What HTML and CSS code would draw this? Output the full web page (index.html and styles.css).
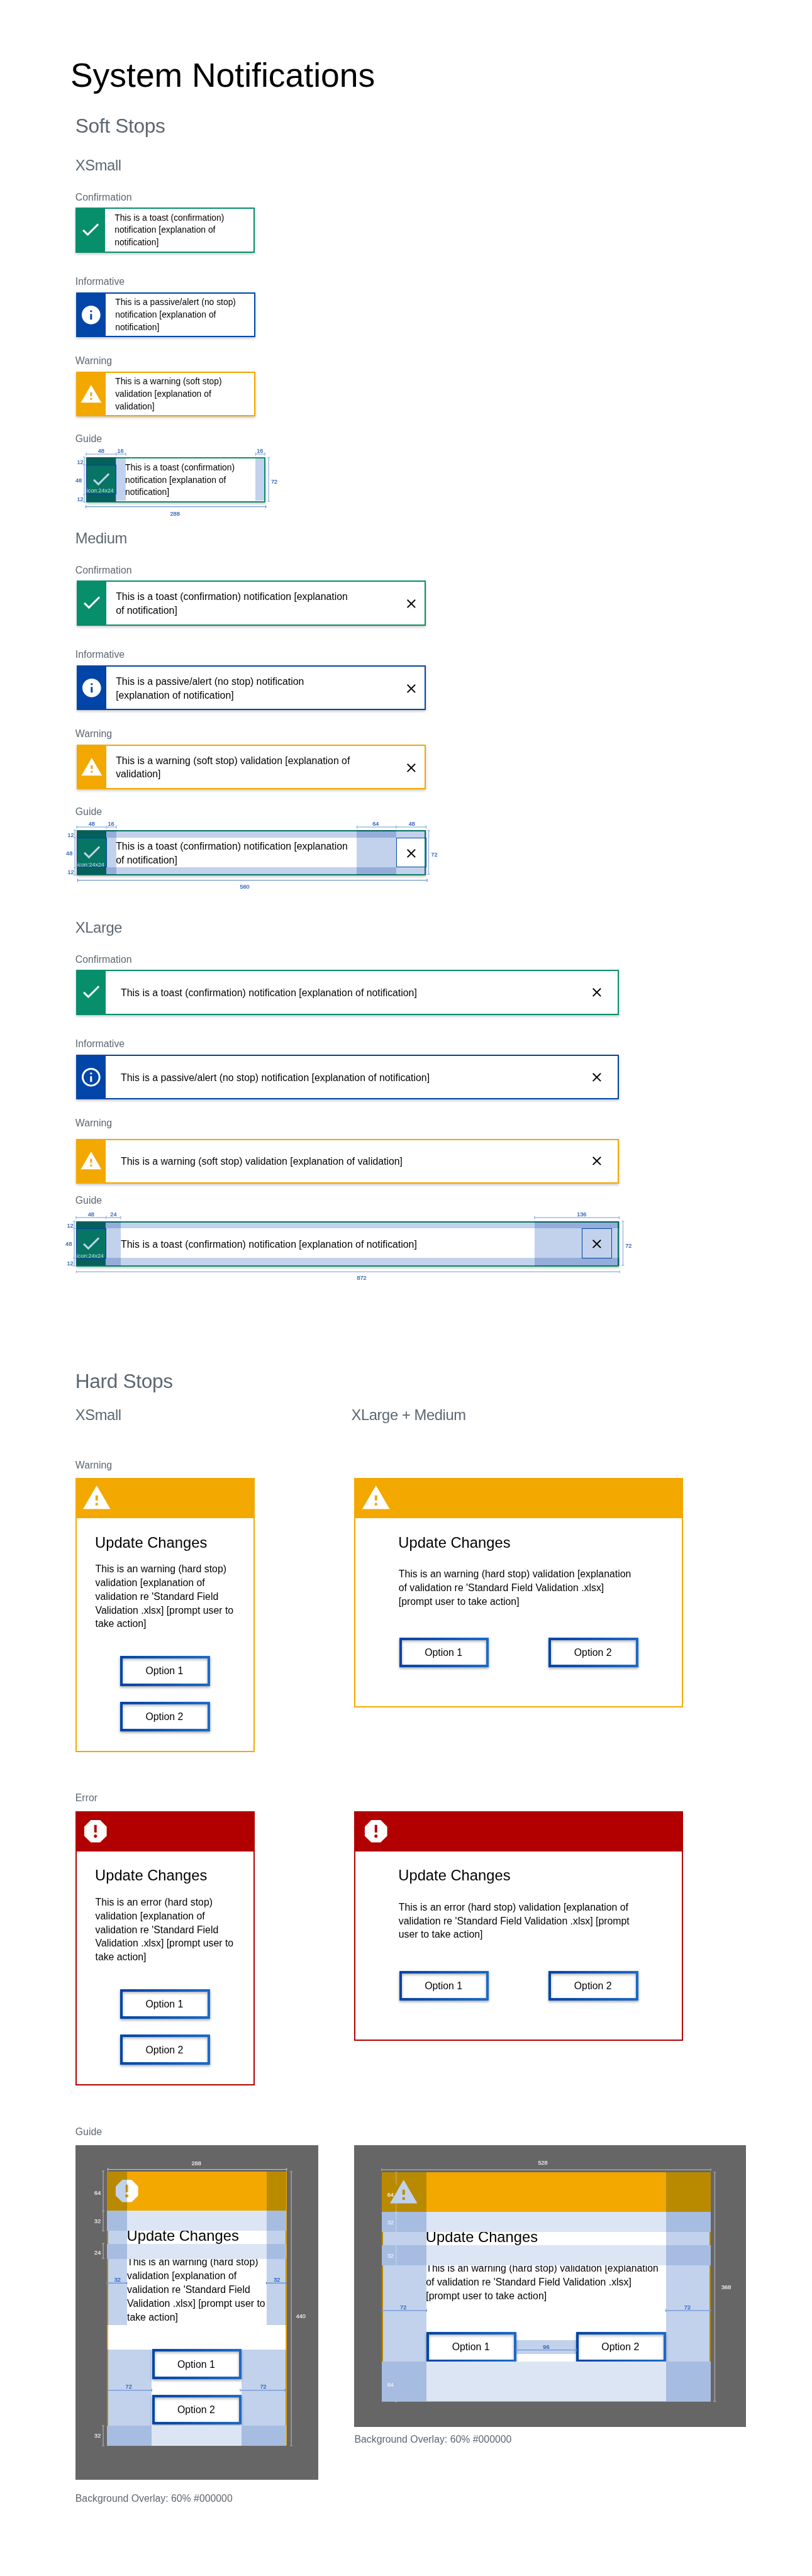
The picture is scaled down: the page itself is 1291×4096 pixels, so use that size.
FILE: index.html
```html
<!DOCTYPE html>
<html lang="en">
<head>
<meta charset="utf-8">
<title>System Notifications</title>
<link rel="stylesheet" href="styles.css">
</head>
<body>
<svg class="sprite" aria-hidden="true">
  <symbol id="check" viewBox="0 0 24 24"><path d="M9 16.17L4.83 12l-1.42 1.41L9 19 21 7l-1.41-1.41z"/></symbol>
  <symbol id="info" viewBox="0 0 24 24"><path d="M12 2C6.48 2 2 6.48 2 12s4.480 10 10 10 10-4.480 10-10S17.520 2 12 2zm1 15h-2v-6h2v6zm0-8h-2V7h2v2z"/></symbol>
  <symbol id="info-outline" viewBox="0 0 24 24"><path d="M11 17h2v-6h-2v6zm1-15C6.48 2 2 6.48 2 12s4.480 10 10 10 10-4.480 10-10S17.520 2 12 2zm0 18c-4.410 0-8-3.590-8-8s3.590-8 8-8 8 3.590 8 8-3.590 8-8 8zM11 9h2V7h-2v2z"/></symbol>
  <symbol id="warning" viewBox="0 0 24 24"><path d="M1 21h22L12 2 1 21zm12-3h-2v-2h2v2zm0-4h-2v-4h2v4z"/></symbol>
  <symbol id="report" viewBox="0 0 24 24"><path d="M15.730 3H8.270L3 8.270v7.460L8.270 21h7.460L21 15.730V8.270L15.730 3zM12 17.300c-.72 0-1.300-.58-1.300-1.300 0-.72.58-1.300 1.300-1.300.72 0 1.300.58 1.300 1.300 0 .72-.58 1.300-1.300 1.300zm1-4.300h-2V7h2v6z"/></symbol>
  <symbol id="close" viewBox="0 0 24 24"><path d="M19 6.410L17.590 5 12 10.590 6.410 5 5 6.410 10.590 12 5 17.590 6.410 19 12 13.410 17.590 19 19 17.590 13.410 12z"/></symbol>
</svg>
<main class="page">
  <h1>System Notifications</h1>

  <h2 class="soft-title">Soft Stops</h2>

  <section class="sizes xsmall">
    <h3>XSmall</h3>
    <div class="spec">
      <p class="label">Confirmation</p>
      <div class="toast confirm first"><span class="badge"><svg class="tick"><use href="#check"/></svg></span><p>This is a toast (confirmation)<br>notification [explanation of<br>notification]</p></div>
    </div>
    <div class="spec">
      <p class="label">Informative</p>
      <div class="toast inform"><span class="badge"><svg><use href="#info"/></svg></span><p>This is a passive/alert (no stop)<br>notification [explanation of<br>notification]</p></div>
    </div>
    <div class="spec">
      <p class="label">Warning</p>
      <div class="toast warn"><span class="badge"><svg><use href="#warning"/></svg></span><p>This is a warning (soft stop)<br>validation [explanation of<br>validation]</p></div>
    </div>
    <div class="spec guide">
      <p class="label">Guide</p>
      <div class="toast confirm"><span class="badge"><svg class="tick"><use href="#check"/></svg></span><p>This is a toast (confirmation)<br>notification [explanation of<br>notification]</p>
        <svg class="over tints" viewBox="0 0 288 72">
          <rect width="48" height="72"/><rect width="48" height="12"/><rect y="60" width="48" height="12"/>
          <rect x="48" y="2" width="16" height="68"/><rect x="272" y="2" width="14" height="68"/>
        </svg>
        <svg class="over dims" viewBox="0 0 288 72">
          <rect class="frame" x=".5" y="12.5" width="47" height="47"/>
          <text class="note" x="22.500" y="56.800">icon:24x24</text>
          <path d="M0-5H64M272-5H287.500M0-7.500v5M48-7.500v5M63.500-7.500v5M272-7.500v5M287-7.500v5M-3 0V72M-5 0h4M-5 12h4M-5 60h4M-5 72h4M293 .5V71M291 .5h4M291 71h4"/>
          <path class="strong" d="M-.5 79.500H288.500M-.5 77v5M288.500 77v5"/>
          <text x="24" y="-7.200">48</text><text x="55" y="-7.200">16</text><text x="279" y="-7.200">16</text>
          <text x="-9.500" y="10.900">12</text><text x="-12" y="39.900">48</text><text x="-9.500" y="70.900">12</text>
          <text x="302" y="42.900">72</text><text x="142.500" y="93.900">288</text>
        </svg>
      </div>
    </div>
  </section>

  <section class="sizes medium">
    <h3>Medium</h3>
    <div class="spec">
      <p class="label">Confirmation</p>
      <div class="toast confirm"><span class="badge"><svg class="tick"><use href="#check"/></svg></span><p>This is a toast (confirmation) notification [explanation<br>of notification]</p><svg class="close"><use href="#close"/></svg></div>
    </div>
    <div class="spec">
      <p class="label">Informative</p>
      <div class="toast inform"><span class="badge"><svg><use href="#info"/></svg></span><p>This is a passive/alert (no stop) notification<br>[explanation of notification]</p><svg class="close"><use href="#close"/></svg></div>
    </div>
    <div class="spec">
      <p class="label">Warning</p>
      <div class="toast warn"><span class="badge"><svg><use href="#warning"/></svg></span><p>This is a warning (soft stop) validation [explanation of<br>validation]</p><svg class="close"><use href="#close"/></svg></div>
    </div>
    <div class="spec guide">
      <p class="label">Guide</p>
      <div class="toast confirm"><span class="badge"><svg class="tick"><use href="#check"/></svg></span><p>This is a toast (confirmation) notification [explanation<br>of notification]</p><svg class="close"><use href="#close"/></svg>
        <svg class="over tints" viewBox="0 0 561 72">
          <rect width="48" height="72"/><rect x="48" width="16" height="72"/><rect x="449" width="64" height="72"/>
          <rect width="561" height="12"/><rect y="60" width="561" height="12"/>
        </svg>
        <svg class="over dims" viewBox="0 0 561 72">
          <rect class="frame" x=".5" y="12.500" width="47" height="47"/><rect class="frame" x="513.500" y="12.500" width="47" height="47"/>
          <text class="note" x="22.500" y="58.800">icon:24x24</text>
          <path d="M0-5H64M450-5H561M0-7.500v5M48-7.500v5M63.500-7.500v5M450-7.500v5M513-7.500v5M561-7.500v5M-3 0V72M-5 0h4M-5 12h4M-5 60h4M-5 72h4M565 .5V71M563 .5h4M563 71h4"/>
          <path class="strong" d="M1.500 80.500H562.500M1.500 78v5M562.500 78v5"/>
          <text x="24" y="-7.200">48</text><text x="55" y="-7.200">16</text><text x="480" y="-7.200">64</text><text x="538" y="-7.200">48</text>
          <text x="-9.500" y="10.900">12</text><text x="-12" y="39.900">48</text><text x="-9.500" y="70.900">12</text>
          <text x="574" y="42.900">72</text><text x="269.700" y="93.900">560</text>
        </svg>
      </div>
    </div>
  </section>

  <section class="sizes xlarge">
    <h3>XLarge</h3>
    <div class="spec">
      <p class="label">Confirmation</p>
      <div class="toast confirm"><span class="badge"><svg class="tick"><use href="#check"/></svg></span><p>This is a toast (confirmation) notification [explanation of notification]</p><svg class="close"><use href="#close"/></svg></div>
    </div>
    <div class="spec">
      <p class="label">Informative</p>
      <div class="toast inform"><span class="badge"><svg><use href="#info-outline"/></svg></span><p>This is a passive/alert (no stop) notification [explanation of notification]</p><svg class="close"><use href="#close"/></svg></div>
    </div>
    <div class="spec spaced">
      <p class="label">Warning</p>
      <div class="toast warn"><span class="badge"><svg><use href="#warning"/></svg></span><p>This is a warning (soft stop) validation [explanation of validation]</p><svg class="close"><use href="#close"/></svg></div>
    </div>
    <div class="spec guide">
      <p class="label">Guide</p>
      <div class="toast confirm"><span class="badge"><svg class="tick"><use href="#check"/></svg></span><p>This is a toast (confirmation) notification [explanation of notification]</p><svg class="close"><use href="#close"/></svg>
        <svg class="over tints" viewBox="0 0 872 72">
          <rect width="48" height="72"/><rect x="48" width="24" height="72"/><rect x="736" width="136" height="72"/>
          <rect width="872" height="11.500"/><rect y="59" width="872" height="12"/>
        </svg>
        <svg class="over dims" viewBox="0 0 872 72">
          <rect class="frame" x=".5" y="11.500" width="47" height="47.500"/><rect class="frame" x="812.500" y="11.500" width="47" height="47.500"/>
          <text class="note" x="22.500" y="58.500">icon:24x24</text>
          <path d="M0-6H72M736-6H872M0-8.500v5M48-8.500v5M71.500-8.500v5M736-8.500v5M872-8.500v5M-3 0V71.500M-5 0h4M-5 11.500h4M-5 59h4M-5 71.500h4M878 0V71M876 0h4M876 71h4M.5 81H872.500M.5 79v4M872.500 79v4"/>
          <text x="24" y="-7.800">48</text><text x="60" y="-7.800">24</text><text x="811.700" y="-7.800">136</text>
          <text x="-9.500" y="10.200">12</text><text x="-12" y="39.200">48</text><text x="-9.500" y="70.200">12</text>
          <text x="887" y="42">72</text><text x="458.500" y="94.200">872</text>
        </svg>
      </div>
    </div>
  </section>

  <h2 class="hard-title">Hard Stops</h2>

  <section class="modals">
    <h3>XSmall</h3>
    <h3 class="wide-title">XLarge + Medium</h3>

    <p class="label row-label">Warning</p>
    <article class="modal narrow warn">
      <header><svg class="shift"><use href="#warning"/></svg></header>
      <div class="body">
        <h4>Update Changes</h4>
        <p>This is an warning (hard stop)<br>validation [explanation of<br>validation re 'Standard Field<br>Validation .xlsx] [prompt user to<br>take action]</p>
        <div class="actions"><button>Option 1</button><button>Option 2</button></div>
      </div>
    </article>
    <article class="modal wide warn">
      <header><svg><use href="#warning"/></svg></header>
      <div class="body">
        <h4>Update Changes</h4>
        <p>This is an warning (hard stop) validation [explanation<br>of validation re 'Standard Field Validation .xlsx]<br>[prompt user to take action]</p>
        <div class="actions"><button>Option 1</button><button>Option 2</button></div>
      </div>
    </article>

    <p class="label row-label">Error</p>
    <article class="modal narrow error">
      <header><svg><use href="#report"/></svg></header>
      <div class="body">
        <h4>Update Changes</h4>
        <p>This is an error (hard stop)<br>validation [explanation of<br>validation re 'Standard Field<br>Validation .xlsx] [prompt user to<br>take action]</p>
        <div class="actions"><button>Option 1</button><button>Option 2</button></div>
      </div>
    </article>
    <article class="modal wide error">
      <header><svg><use href="#report"/></svg></header>
      <div class="body">
        <h4>Update Changes</h4>
        <p>This is an error (hard stop) validation [explanation of<br>validation re 'Standard Field Validation .xlsx] [prompt<br>user to take action]</p>
        <div class="actions"><button>Option 1</button><button>Option 2</button></div>
      </div>
    </article>

    <p class="label row-label">Guide</p>
    <figure>
      <div class="backdrop narrow-backdrop">
        <article class="modal narrow warn">
          <header><svg><use href="#report"/></svg></header>
          <div class="body">
            <h4>Update Changes</h4>
            <p>This is an warning (hard stop)<br>validation [explanation of<br>validation re 'Standard Field<br>Validation .xlsx] [prompt user to<br>take action]</p>
            <div class="actions"><button>Option 1</button><button>Option 2</button></div>
          </div>
          <svg class="over strips" viewBox="0 0 288 440">
            <rect y="63" width="288" height="32"/><rect y="116" width="288" height="24"/><rect y="408" width="288" height="32"/>
          </svg>
          <svg class="over tints" viewBox="0 0 288 440">
            <rect width="32" height="246"/><rect x="256" width="32" height="246"/>
            <rect y="286" width="72" height="154"/><rect x="216" y="286" width="72" height="154"/>
          </svg>
          <svg class="over dims" viewBox="0 0 288 440">
            <path class="light thin" d="M1.500-3.500H288.500M1.500-6v5M288.500-6v5"/>
            <path class="light" d="M-6-1V95M-6 115.500V139.500M-6 408V440M296 0V440M-8-1h4M-8 63h4M-8 95h4M-8 115.500h4M-8 139.500h4M-8 408h4M-8 440h4M294 0h4M294 440h4"/>
            <path class="strong" d="M0 179H32M256 179H288M.5 351H72M214 351H286M0 177v4M32 177v4M256 177v4M288 177v4M72 349v4M214 349v4M286 349v4"/>
            <g class="light"><text x="143.500" y="-10.200">288</text><text x="-15" y="37.600">64</text><text x="-15" y="83.200">32</text><text x="-15" y="133.200">24</text><text x="-15" y="427.500">32</text><text x="311.300" y="235.700">440</text></g>
            <text x="17" y="176.800">32</text><text x="273" y="176.800">32</text><text x="35" y="348.800">72</text><text x="251" y="348.800">72</text>
          </svg>
        </article>
      </div>
      <figcaption class="label">Background Overlay: 60% #000000</figcaption>
    </figure>
    <figure class="wide-figure">
      <div class="backdrop wide-backdrop">
        <article class="modal wide warn">
          <header><svg><use href="#warning"/></svg></header>
          <div class="body">
            <h4>Update Changes</h4>
            <p>This is an warning (hard stop) validation [explanation<br>of validation re 'Standard Field Validation .xlsx]<br>[prompt user to take action]</p>
            <div class="actions"><button>Option 1</button><button>Option 2</button></div>
          </div>
          <svg class="over strips" viewBox="0 0 528 368">
            <rect y="64" width="528" height="32"/><rect y="117" width="528" height="32"/><rect y="304" width="528" height="64"/>
          </svg>
          <svg class="over tints" viewBox="0 0 528 368">
            <rect width="72" height="368"/><rect x="456" width="72" height="368"/><rect x="216" y="270" width="96" height="22"/>
          </svg>
          <svg class="over dims" viewBox="0 0 528 368">
            <path class="light" d="M-.5-4H528.500M0-6v4M528-6v4M534.500 0V368M532.500 0h4M532.500 368h4"/>
            <path class="faint" d="M23 0V20M23 50V96M23 117V149M21 0h4M21 64h4M21 368.500h4"/>
            <path class="strong" d="M0 222H72M456 222H528M216 285.500H312M.5 220v4M72 220v4M456 220v4M528 220v4M216 283v5M312 283v5"/>
            <g class="light"><text x="258.500" y="-12.200">528</text><text x="14" y="38.900">64</text><text x="14" y="83.900">32</text><text x="14" y="136.900">32</text><text x="14" y="343.900">64</text><text x="553" y="187.900">368</text></g>
            <text x="34.500" y="219.900">72</text><text x="490.700" y="219.900">72</text><text x="264" y="283.900">96</text>
          </svg>
        </article>
      </div>
      <figcaption class="label">Background Overlay: 60% #000000</figcaption>
    </figure>
  </section>
</main>
</body>
</html>
```
FILE: styles.css
```css
/* 0.1rem is one design pixel */
html { font-size: 9.903px; }
* { box-sizing: border-box; }
body {
  margin: 0;
  background: #fff;
  color: #000;
  font-family: "Liberation Sans", Arial, Helvetica, sans-serif;
  overflow-x: hidden;
}
h1, h2, h3, h4, p, figure { margin: 0; font-weight: 400; }
.sprite { display: none; }

.page { height: 4096px; padding: 9.05rem 0 0 12.1rem; overflow: hidden; }

h1 { margin-left: -.8rem; font-size: 5.4rem; line-height: 6rem; }
h2 { font-size: 3.2rem; line-height: 3.6rem; letter-spacing: -.035rem; color: #5b6770; }
h3 { font-size: 2.4rem; line-height: 2.8rem; letter-spacing: -.04rem; color: #5b6770; }
.label { font-size: 1.6rem; line-height: 2rem; color: #5b6770; }
.soft-title { margin-top: 3.4rem; }

.sizes { display: grid; align-items: end; }
.xsmall { grid-template-rows: 5.85rem 12.65rem 13.6rem 12.7rem 13.8rem; }
.medium { grid-template-rows: 7.2rem 12.6rem 13.6rem 12.7rem 13.8rem; }
.xlarge { grid-template-rows: 9.8rem 12.6rem 13.6rem 13.5rem 13.3rem; }

.spec { display: flex; flex-direction: column; gap: .7rem; }
.spec.spaced { gap: 1.52rem; }
.spec.guide { gap: 2rem; }
.xlarge .spec.guide { gap: 2.33rem; }

.confirm { --tone: #078e6b; }
.inform { --tone: #0045a7; }
.warn { --tone: #f3a800; }
.error { --tone: #b20000; }

.toast {
  position: relative;
  display: flex;
  align-items: center;
  height: 7.2rem;
  margin-left: .1rem;
  border: 2px solid var(--tone);
  background: #fff;
  box-shadow: 0 2px 4px rgba(0, 0, 0, .24);
}
.badge {
  display: flex;
  align-items: center;
  justify-content: center;
  align-self: stretch;
  flex: none;
  width: 4.8rem;
  margin-left: -2px;
  background: var(--tone);
  fill: #fff;
}
.badge svg { width: 3.6rem; height: 3.6rem; }
.badge .tick { margin-top: -.2rem; }
.toast p { flex: 1; padding: .2rem 0 0 1.5rem; font-size: 1.6rem; line-height: 2.2rem; white-space: nowrap; }
.close { flex: none; width: 2.4rem; height: 2.4rem; margin-right: calc(1.2rem - 2px); }

.xsmall .toast { width: 28.8rem; }
.xsmall .toast p { padding-top: .1rem; font-size: 1.4rem; line-height: 2rem; }
.xsmall .first { margin-left: 0; }
.xsmall .guide .toast { margin-left: 1.7rem; }
.medium .toast { width: 56.1rem; margin-left: .2rem; }
.medium .close { margin-top: .2rem; }
.xlarge .toast { width: 87.2rem; }
.xlarge .toast p { padding-left: 2.4rem; }
.xlarge .close { margin-right: calc(2.4rem - 2px); }

/* Spacing overlays laid over a component, origin at its outer corner */
.over {
  position: absolute;
  left: -2px;
  top: -2px;
  width: calc(100% + 4px);
  height: calc(100% + 4px);
  overflow: visible;
  pointer-events: none;
}
.over rect { shape-rendering: crispEdges; }
.tints, .tints rect { mix-blend-mode: multiply; }
.tints rect { fill: #c2d2ec; }
.strips rect { fill: #dce5f4; }
.dims path { fill: none; stroke: #a2bae4; stroke-width: 1.5; }
.dims path.strong { stroke: #6f94d5; stroke-width: 1.3; }
.dims path.light { stroke: #9c9c9c; stroke-width: 1.7; }
.dims path.thin { stroke: #d0d0d0; stroke-width: 1; }
.dims path.faint { stroke: #fff; stroke-opacity: .25; stroke-width: 1.6; }
.dims .frame { fill: none; stroke: #0041a0; stroke-width: 1; }
.dims text { font-size: 9.2px; text-anchor: middle; fill: #1f57b4; stroke: #1f57b4; stroke-width: .2; }
.dims .note { fill: #c8e2e2; stroke: none; font-size: 9px; }
.dims .light text { fill: #efefef; stroke: #efefef; }

.hard-title { margin-top: 16.65rem; }
.modals {
  display: grid;
  grid-template-columns: 44.8rem auto;
  grid-template-rows: 2.8rem 7.65rem 45.1rem 8.4rem 45.1rem 8.5rem auto;
  align-items: start;
  margin-top: 2.2rem;
}
.wide-title { margin-left: -.5rem; }
.row-label { grid-column: 1 / -1; align-self: end; }
.modals > .modal { margin-top: 1.1rem; }

.modal {
  position: relative;
  border: 2px solid var(--tone);
  background: #fff;
}
.modal header {
  height: 6.4rem;
  margin: -2px -2px 0;
  padding: .8rem 0 0 .8rem;
  background: var(--tone);
  fill: #fff;
}
.modal header svg { display: block; width: 4.8rem; height: 4.8rem; }
.modal header .shift { margin-left: .2rem; }
.modal .body { margin: 0 -2px; padding: 2.52rem 0 0 3.2rem; }
.modal h4 { margin-left: -.05rem; font-size: 2.4rem; line-height: 2.8rem; }
.modal p { margin-top: 1.8rem; font-size: 1.6rem; line-height: 2.2rem; white-space: nowrap; }
.actions { display: flex; margin-top: 4.03rem; }
.narrow { width: 28.8rem; height: 44rem; }
.narrow .actions { flex-direction: column; gap: 2.53rem; padding-left: 4rem; }
.wide { width: 52.8rem; height: 36.8rem; }
.wide header { padding-left: 1.1rem; }
.wide .body { padding-left: 7.1rem; }
.wide p { margin-top: 2.6rem; }
.wide .actions { gap: 9.6rem; margin-top: 4.68rem; padding-left: .1rem; }

button {
  width: 14.4rem;
  height: 4.8rem;
  padding: .1rem .2rem 0 0;
  border: 4px solid transparent;
  background:
    linear-gradient(#fff, #fff) padding-box,
    linear-gradient(90deg, #0044a6, #1b6acb) border-box;
  box-shadow: 0 2px 4px rgba(0, 0, 0, .38), inset 0 2px 4px rgba(0, 0, 0, .32);
  color: #000;
  font: 1.6rem/2rem "Liberation Sans", Arial, Helvetica, sans-serif;
}

.backdrop { background: #666; }
.narrow-backdrop { width: 39rem; height: 53.75rem; padding: 4.2rem 0 0 5.1rem; }
.wide-backdrop { width: 62.9rem; height: 45.2rem; padding: 4.4rem 0 0 4.4rem; }
figure { margin-top: 1.1rem; }
figcaption.label { margin-top: 1.98rem; }
.wide-figure figcaption.label { margin-top: 1.08rem; }
```
